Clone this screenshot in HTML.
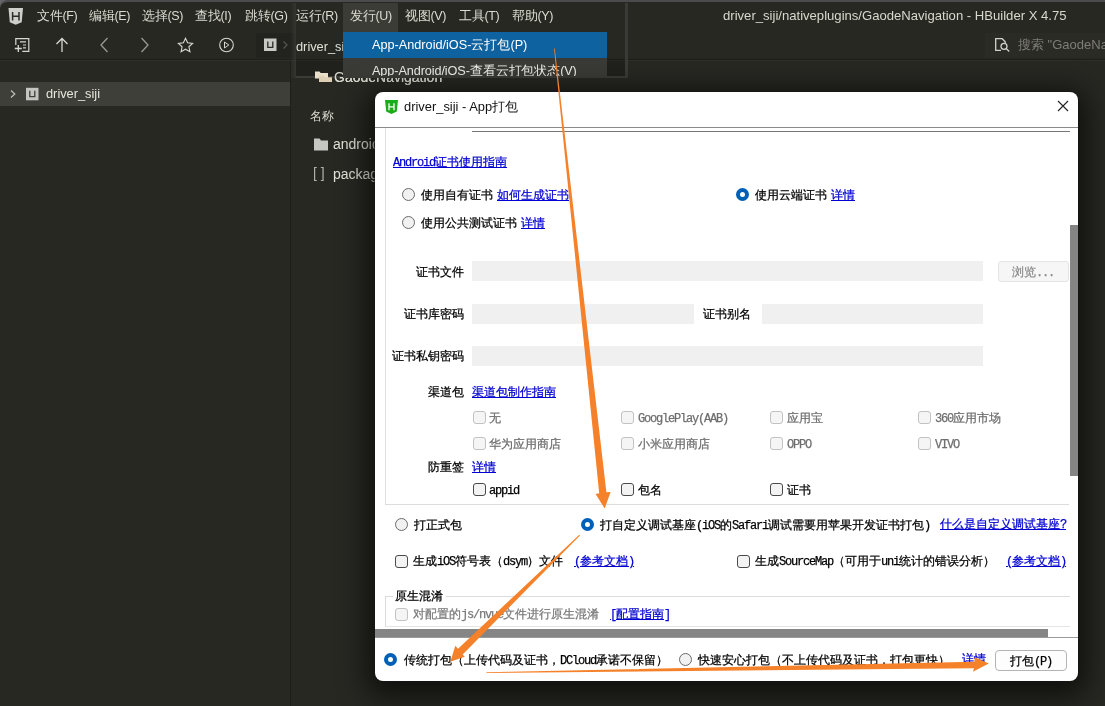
<!DOCTYPE html>
<html><head><meta charset="utf-8">
<style>
*{box-sizing:border-box;margin:0;padding:0}
html,body{width:1105px;height:706px;overflow:hidden;background:#272822}
body{position:relative;font-family:"Liberation Sans",sans-serif;color:#d6d6cc}
.a{position:absolute;white-space:nowrap}
.m,.t,.a{will-change:transform}
.m{position:absolute;top:8px;font-size:12.5px;letter-spacing:-0.3px;line-height:16px;color:#dcdcd2;white-space:nowrap}
.t{position:absolute;font-size:12px;line-height:14px;color:#000;white-space:nowrap;-webkit-text-stroke:0.25px}
.t i{font-style:normal;font-family:"Liberation Mono",monospace;letter-spacing:-1.2px}
.g{color:#6e6e6e}
.l{color:#0000d2;text-decoration:underline}
.inp{position:absolute;background:#f0f0f0;height:20px}
.cb{position:absolute;width:13px;height:13px;margin-top:-1px;border:1px solid #4a4a4a;border-radius:3px;background:#f3f3f3}
.cb.d{border-color:#c2c2c2;background:#f5f5f5}
.rd{position:absolute;width:13px;height:13px;border:1px solid #6a6a6a;border-radius:50%;background:#f1f1f1}
.rd.s{border:4px solid #005fb8;background:#fff}
</style></head><body>
<!-- window top edge -->
<div class="a" style="left:0;top:0;width:1105px;height:2px;background:#4b4b4d"></div>

<div class="a" style="left:0;top:0;width:8px;height:8px;background:#66666a"></div><div class="a" style="left:0;top:0;width:9px;height:9px;background:#272822;border-top-left-radius:8px;border-top:2px solid #4b4b4d"></div>
<!-- menubar -->
<svg class="a" style="left:8px;top:8px" width="16" height="17" viewBox="0 0 16 17"><path d="M0.5 0h14.5l-1.3 14.2-6 2.6-5.9-2.6z" fill="#cfcfcb"/><path d="M4.6 4v8.4M11 4v8.4M4.6 8.2h6.4" stroke="#2b2c27" stroke-width="1.5" fill="none"/></svg>
<div class="m" style="left:37px">文件(F)</div>
<div class="m" style="left:89px">编辑(E)</div>
<div class="m" style="left:142px">选择(S)</div>
<div class="m" style="left:195px">查找(I)</div>
<div class="m" style="left:245px">跳转(G)</div>
<div class="m" style="left:723px;font-size:13.1px;letter-spacing:0;color:#d8d8ce">driver_siji/nativeplugins/GaodeNavigation - HBuilder X 4.75</div>

<!-- toolbar -->
<div class="a" style="left:256px;top:33px;width:40px;height:25px;background:#22231e"></div>
<svg class="a" style="left:0;top:30px" width="300" height="30" viewBox="0 30 300 30" fill="none" stroke="#d8d8d0" stroke-width="1.3">
<path d="M15.800 45v-6.400h13v12.800h-6.500M20 41.800h6M23 45h3M23 47.800h3" stroke-width="1.200"/>
<path d="M14.800 48.500h7M18.300 45v7" stroke-width="1.300"/>
<path d="M62 52v-13.5M56.500 44l5.500-5.500 5.500 5.500"/>
<path d="M107.500 38l-6.500 7 6.500 7" stroke="#9a9a94"/>
<path d="M141.500 38l6.500 7-6.500 7" stroke="#9a9a94"/>
<path d="M185.500 38.200l2.100 4.600 5 .600-3.700 3.400 1 4.900-4.400-2.500-4.400 2.500 1-4.900-3.700-3.400 5-.600z" stroke-width="1.100"/>
<circle cx="226.500" cy="45" r="6.800" stroke-width="1.100"/><path d="M224.500 42l4.300 3-4.300 3z" stroke-width="1"/>
<rect x="264" y="38.500" width="12.500" height="12.500" fill="#c8c8c4" stroke="none"/>
<path d="M267.800 41.500v5.800h5v-5.800" stroke="#2b2c27" stroke-width="1.300"/>
<path d="M283.500 41.500l3.500 3.500-3.500 3.500" stroke="#55564f" stroke-width="1.200"/>
</svg>
<div class="a" style="left:0;top:59px;width:1105px;height:1px;background:#1d1e1a"></div>
<div class="a" style="left:0;top:60px;width:1105px;height:1px;background:#2f302a"></div>

<!-- search -->
<div class="a" style="left:985px;top:33px;width:120px;height:25px;background:#2a2b25"></div>
<svg class="a" style="left:994px;top:37px" width="18" height="16" viewBox="0 0 18 16" fill="none" stroke="#d2d2cc" stroke-width="1.300"><path d="M7 13.300H1.700V1.700h6.500l3 3v2"/><circle cx="10" cy="9.300" r="3"/><path d="M12.200 11.500l3 3"/></svg>
<div class="a" style="left:1018px;top:37px;font-size:13px;line-height:16px;color:#7e7e76">搜索 "GaodeNavigation"</div>

<!-- sidebar -->
<div class="a" style="left:0;top:82px;width:290px;height:24px;background:#3e3f38"></div>
<svg class="a" style="left:8px;top:86px" width="34" height="16" viewBox="0 0 34 16" fill="none"><path d="M3 4.500l3.800 3.500-3.800 3.500" stroke="#c0c0b8" stroke-width="1.200"/><rect x="18" y="1.800" width="12.500" height="12.500" fill="#c4c4c0"/><path d="M21.800 4.800v5.800h5v-5.800" stroke="#3e3f38" stroke-width="1.300"/></svg>
<div class="a" style="left:46px;top:86px;font-size:12.8px;line-height:16px;color:#e6e6dc">driver_siji</div>
<div class="a" style="left:290px;top:61px;width:1px;height:645px;background:#1e1f1a"></div>

<!-- editor file list -->
<div class="a" style="left:334px;top:69px;font-size:14px;line-height:16px;color:#d8d8ce">GaodeNavigation</div>
<div class="a" style="left:310px;top:108px;font-size:12px;line-height:16px;color:#dcdcd2">名称</div>
<svg class="a" style="left:314px;top:138px" width="15" height="13" viewBox="0 0 15 13"><path d="M0 .500h5.500l1.500 2H14v10H0z" fill="#c6c6c2"/></svg>
<div class="a" style="left:333px;top:136px;font-size:14px;line-height:16px;color:#e2e2d8">android</div>
<div class="a" style="left:313px;top:165px;font-size:14px;line-height:16px;color:#b0b0a8">[ ]</div>
<div class="a" style="left:333px;top:166px;font-size:14px;line-height:16px;color:#e2e2d8">package.json</div>

<!-- pasted menu overlay -->
<div class="a" style="left:290px;top:3px;width:7px;height:75px;background:linear-gradient(90deg,rgba(60,60,55,0),rgba(60,60,55,.8))"></div>
<div class="a" id="ov" style="left:296px;top:3px;width:332px;height:75px;background:#272822;overflow:hidden;border-right:3px solid #3a3a36;border-bottom:2px solid #3a3a36">
 <div class="a" style="left:0;top:56px;width:332px;height:1px;background:#1c1d19"></div>
 <div class="a" style="left:0;top:58px;width:332px;height:16px;background:#20211c"></div>
 <div class="a" style="left:47px;top:0;width:55px;height:29px;background:#3b3c36"></div>
 <div class="m" style="left:0;top:5px">运行(R)</div>
 <div class="m" style="left:54px;top:5px">发行(U)</div>
 <div class="m" style="left:109px;top:5px">视图(V)</div>
 <div class="m" style="left:163px;top:5px">工具(T)</div>
 <div class="m" style="left:216px;top:5px">帮助(Y)</div>
 <div class="a" style="left:0;top:36px;font-size:12.8px;line-height:16px;color:#e0e0d6">driver_siji</div>
 <div class="a" style="left:47px;top:29px;width:264px;height:46px;background:#3a3b37"></div>
 <div class="a" style="left:47px;top:29px;width:264px;height:26px;background:#0e62a0"></div>
 <div class="a" style="left:76px;top:34px;font-size:12.7px;line-height:16px;color:#fff">App-Android/iOS-云打包(P)</div>
 <div class="a" style="left:76px;top:60px;font-size:12.7px;letter-spacing:-0.1px;line-height:16px;color:#f0f0ea">App-Android/iOS-查看云打包状态(V)</div>
</div>

<svg class="a" style="left:315px;top:71px" width="18" height="12" viewBox="0 0 18 12"><path d="M0 .5h4.500l1.200 1.500H13v5.500H0z" fill="#eadfcb"/><path d="M4 4.800h4.500l1.200 1.500H17v4.700H4z" fill="#dccfb3"/></svg>
<div class="a" style="left:334px;top:69px;font-size:14px;line-height:16px;color:#d8d8ce;clip-path:polygon(0 0,9px 0,9px 9px,200px 9px,200px 16px,0 16px)">GaodeNavigation</div>
<!-- dialog -->
<div class="a" id="dlg" style="left:375px;top:92px;width:703px;height:589px;background:#fff;border-radius:8px;box-shadow:0 0 0 1px rgba(20,20,18,.5),0 7px 28px 9px rgba(0,0,0,.6);overflow:hidden">
 <svg class="a" style="left:10px;top:8px" width="13" height="14" viewBox="0 0 13 14"><path d="M0 0h13l-1.200 11.600-5.300 2.400-5.300-2.400z" fill="#1aad19"/><path d="M4 3.300v7M9 3.300v7M4 6.800h5" stroke="#fff" stroke-width="1.300" fill="none"/></svg>
 <div class="a" style="left:29px;top:7px;font-size:12.9px;line-height:16px;color:#111">driver_siji - App打包</div>
 <svg class="a" style="left:682px;top:8px" width="12" height="12" viewBox="0 0 12 12"><path d="M1 1l10 10M11 1L1 11" stroke="#222" stroke-width="1.100"/></svg>
 <div class="a" style="left:0;top:35px;width:703px;height:1px;background:#8a8a8a"></div>
 <div class="a" style="left:97px;top:39px;width:598px;height:1px;background:#777"></div>
 <!-- inner panel borders -->
 <div class="a" style="left:10px;top:36px;width:1px;height:377px;background:#e0e0e4"></div>
 <div class="a" style="left:10px;top:412px;width:684px;height:1px;background:#dcdcdc"></div>
 <!-- v scrollbar -->
 <div class="a" style="left:695px;top:133px;width:8px;height:251px;background:#858585"></div>

 <div class="t l" style="left:18px;top:63px"><i>Android</i>证书使用指南</div>
 <div class="rd" style="left:27px;top:96px"></div>
 <div class="t" style="left:46px;top:96px">使用自有证书</div><div class="t l" style="left:122px;top:96px">如何生成证书</div>
 <div class="rd" style="left:27px;top:124px"></div>
 <div class="t" style="left:46px;top:124px">使用公共测试证书</div><div class="t l" style="left:146px;top:124px">详情</div>
 <div class="rd s" style="left:361px;top:96px"></div>
 <div class="t" style="left:380px;top:96px">使用云端证书</div><div class="t l" style="left:456px;top:96px">详情</div>

 <div class="t" style="right:614px;top:173px">证书文件</div>
 <div class="inp" style="left:97px;top:169px;width:511px"></div>
 <div class="a" style="left:623px;top:169px;width:71px;height:21px;background:#f6f6f6;border:1px solid #e4e4e4;border-radius:3px"></div>
 <div class="t" style="left:637px;top:173px;color:#8c8c8c">浏览<i>...</i></div>
 <div class="t" style="right:614px;top:215px">证书库密码</div>
 <div class="inp" style="left:97px;top:212px;width:222px"></div>
 <div class="t" style="left:328px;top:215px">证书别名</div>
 <div class="inp" style="left:387px;top:212px;width:221px"></div>
 <div class="t" style="right:614px;top:257px">证书私钥密码</div>
 <div class="inp" style="left:97px;top:254px;width:511px"></div>

 <div class="t" style="right:614px;top:293px">渠道包</div>
 <div class="t l" style="left:97px;top:293px">渠道包制作指南</div>
 <div class="cb d" style="left:98px;top:320px"></div><div class="t g" style="left:114px;top:319px">无</div>
 <div class="cb d" style="left:246px;top:320px"></div><div class="t g" style="left:263px;top:319px"><i>GooglePlay(AAB)</i></div>
 <div class="cb d" style="left:395px;top:320px"></div><div class="t g" style="left:412px;top:319px">应用宝</div>
 <div class="cb d" style="left:543px;top:320px"></div><div class="t g" style="left:560px;top:319px"><i>360</i>应用市场</div>
 <div class="cb d" style="left:98px;top:346px"></div><div class="t g" style="left:114px;top:345px">华为应用商店</div>
 <div class="cb d" style="left:246px;top:346px"></div><div class="t g" style="left:263px;top:345px">小米应用商店</div>
 <div class="cb d" style="left:395px;top:346px"></div><div class="t g" style="left:412px;top:345px"><i>OPPO</i></div>
 <div class="cb d" style="left:543px;top:346px"></div><div class="t g" style="left:560px;top:345px"><i>VIVO</i></div>
 <div class="t" style="right:614px;top:368px">防重签</div>
 <div class="t l" style="left:97px;top:368px">详情</div>
 <div class="cb" style="left:98px;top:392px"></div><div class="t" style="left:114px;top:391px"><i>appid</i></div>
 <div class="cb" style="left:246px;top:392px"></div><div class="t" style="left:263px;top:391px">包名</div>
 <div class="cb" style="left:395px;top:392px"></div><div class="t" style="left:412px;top:391px">证书</div>

 <div class="rd" style="left:20px;top:426px"></div>
 <div class="t" style="left:39px;top:426px">打正式包</div>
 <div class="rd s" style="left:206px;top:426px"></div>
 <div class="t" style="left:225px;top:426px">打自定义调试基座<i>(iOS</i>的<i>Safari</i>调试需要用苹果开发证书打包<i>)</i></div>
 <div class="t l" style="left:565px;top:425px">什么是自定义调试基座<i>?</i></div>

 <div class="cb" style="left:20px;top:464px"></div>
 <div class="t" style="left:38px;top:462px">生成<i>iOS</i>符号表（<i>dsym</i>）文件</div>
 <div class="t l" style="left:199px;top:462px"><i>(</i>参考文档<i>)</i></div>
 <div class="cb" style="left:362px;top:464px"></div>
 <div class="t" style="left:380px;top:462px">生成<i>SourceMap</i>（可用于<i>uni</i>统计的错误分析）</div>
 <div class="t l" style="left:631px;top:462px"><i>(</i>参考文档<i>)</i></div>

 <!-- fieldset -->
 <div class="a" style="left:10px;top:504px;width:685px;height:31px;border:1px solid #dcdcdc;border-bottom-color:#e4e4e4;border-right:none"></div>
 <div class="t" style="left:18px;top:497px;background:#fff;padding:0 3px 0 2px">原生混淆</div>
 <div class="cb d" style="left:20px;top:517px"></div>
 <div class="t g" style="left:38px;top:515px;color:#7a7a7a">对配置的<i>js/nvue</i>文件进行原生混淆</div>
 <div class="t l" style="left:235px;top:515px"><i>[</i>配置指南<i>]</i></div>

 <!-- h scrollbar -->
 <div class="a" style="left:0;top:537px;width:673px;height:8px;background:#858585"></div>
 <div class="a" style="left:0;top:545px;width:703px;height:1px;background:#9a9a9a"></div>

 <div class="rd s" style="left:9px;top:561px"></div>
 <div class="t" style="left:29px;top:561px">传统打包（上传代码及证书，<i>DCloud</i>承诺不保留）</div>
 <div class="rd" style="left:304px;top:561px"></div>
 <div class="t" style="left:323px;top:561px">快速安心打包（不上传代码及证书，打包更快）</div>
 <div class="t l" style="left:587px;top:560px;text-decoration:none">详情</div>
 <div class="a" style="left:620px;top:558px;width:72px;height:21px;background:#fdfdfd;border:1px solid #b4b4b4;border-radius:4px"></div>
 <div class="t" style="left:635px;top:562px">打包<i>(P)</i></div>
</div>

<!-- arrows -->
<svg class="a" style="left:0;top:0" width="1105" height="706" viewBox="0 0 1105 706">
<g fill="#f5822a">
<path d="M554 48.500 L554.800 48.500 L606.400 492.300 L610.600 492 L604.700 508.500 L595.600 494 L599.200 493.300 Z"/>
<path d="M579.300 534.700 L580 535.400 L462.700 654.500 L464.800 656.800 L450.300 661.700 L455.300 645.800 L458 648.800 Z"/>
<path d="M486.500 672.200 L486.500 673 L974 668.200 L973 671.700 L988.800 663.400 L974.600 657.200 L974.400 661.800 Z"/>
</g>
</svg>
</body></html>
